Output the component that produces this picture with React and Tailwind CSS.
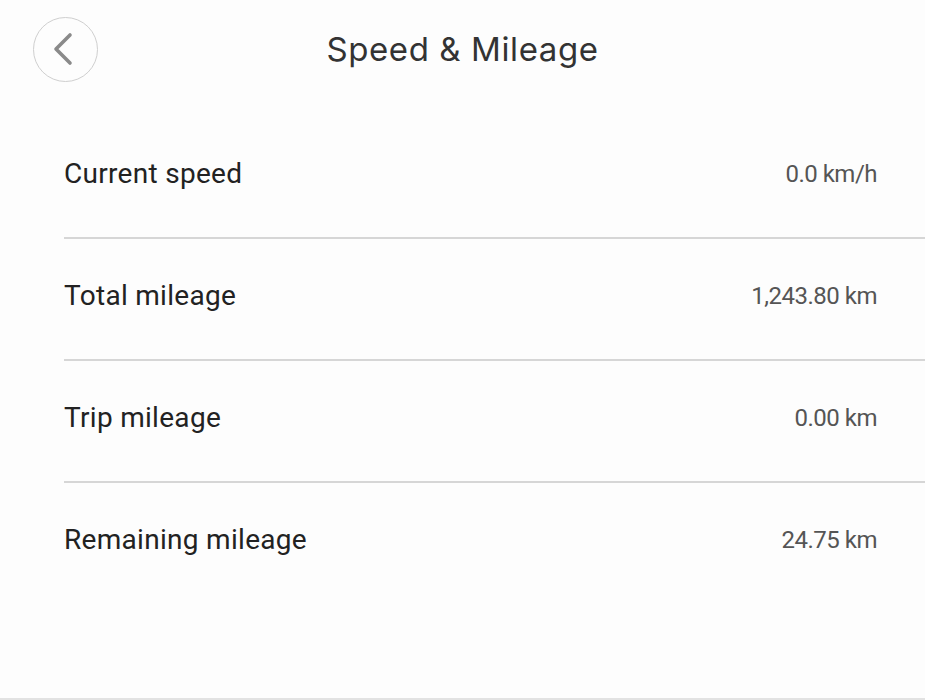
import React from "react";

const rows = [
  ["Current speed", "0.0 km/h"],
  ["Total mileage", "1,243.80 km"],
  ["Trip mileage", "0.00 km"],
  ["Remaining mileage", "24.75 km"],
];

export default function App() {
  return (
    <div className="w-[925px] h-[700px] bg-[#fdfdfd] flex flex-col border-b-2 border-[#e2e2e2] overflow-hidden">
      <div className="relative h-[117px] shrink-0 flex items-start">
        <div className="ml-[33px] mt-[17px] w-[65px] h-[65px] rounded-full border-[1.5px] border-[#cfcfcf] flex items-center justify-center">
          <svg width="65" height="65" viewBox="0 0 65 65" className="-m-[1.5px]">
            <path d="M37 18 L23 32 L37 46" fill="none" stroke="#8a8a8a" strokeWidth="3.6" strokeLinecap="round" strokeLinejoin="round" />
          </svg>
        </div>
        <div className="absolute left-0 right-0 top-[25px] text-center text-[33px] leading-[48px] text-[#333] font-['Inter',sans-serif] tracking-[0.6px]">
          Speed &amp; Mileage
        </div>
      </div>
      <div className="flex flex-col pl-[64px]">
        {rows.map(([label, value], i) => (
          <div
            key={label}
            className={`h-[122px] flex items-start justify-between pr-[48px] ${i < rows.length - 1 ? "border-b-2 border-[#d6d6d6]" : ""}`}
          >
            <div className="mt-[39px] text-[28px] leading-[36px] text-[#222] font-['Roboto',sans-serif] tracking-[0.3px]">
              {label}
            </div>
            <div className="mt-[41px] text-[24px] leading-[32px] text-[#555] font-['Roboto',sans-serif] tracking-[-0.5px]">
              {value}
            </div>
          </div>
        ))}
      </div>
    </div>
  );
}
